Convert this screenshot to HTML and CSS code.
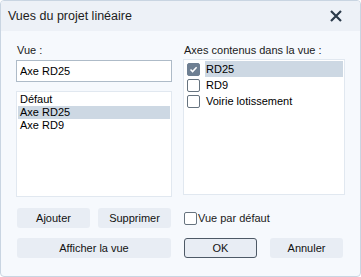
FILE: index.html
```html
<!DOCTYPE html>
<html lang="fr">
<head>
  <meta charset="UTF-8">
  <title>Vues du projet linéaire</title>
  <link rel="stylesheet" href="styles.css">
</head>
<body>
  <div class="dialog">
    <div class="titlebar">
      <span class="title">Vues du projet linéaire</span>
      <svg class="close" width="12" height="12" viewBox="0 0 12 12">
        <path d="M1 1 L11 11 M11 1 L1 11" stroke="#2b3a4a" stroke-width="2.2" fill="none"/>
      </svg>
    </div>

    <div class="content">
      <div class="columns">
        <!-- Left column: view name + list of views -->
        <div class="col left">
          <label class="caption">Vue :</label>
          <input class="name-input" type="text" value="Axe RD25">
          <ul class="listbox">
            <li>Défaut</li>
            <li class="selected">Axe RD25</li>
            <li>Axe RD9</li>
          </ul>
        </div>

        <!-- Right column: axes in the view -->
        <div class="col right">
          <label class="caption">Axes contenus dans la vue :</label>
          <ul class="listbox checklist">
            <li><span class="box checked"><svg width="9" height="9" viewBox="0 0 9 9"><path d="M1.5 4.5 L3.6 6.6 L7.6 2.2" stroke="#fff" stroke-width="1.5" fill="none"/></svg></span><span class="item selected">RD25</span></li>
            <li><span class="box"></span><span class="item">RD9</span></li>
            <li><span class="box"></span><span class="item">Voirie lotissement</span></li>
          </ul>
        </div>
      </div>

      <div class="actions">
        <div class="row">
          <div class="group left">
            <button>Ajouter</button>
            <button>Supprimer</button>
          </div>
          <div class="group right">
            <label class="check-label"><span class="box"></span>Vue par défaut</label>
          </div>
        </div>
        <div class="row">
          <div class="group left">
            <button class="wide">Afficher la vue</button>
          </div>
          <div class="group right">
            <button class="default">OK</button>
            <button>Annuler</button>
          </div>
        </div>
      </div>
    </div>
  </div>
</body>
</html>
```

FILE: styles.css
```css
html, body {
  margin: 0;
  padding: 0;
  background: #fff;
}
body {
  font-family: "Liberation Sans", Arial, sans-serif;
  font-size: 11px;
  color: #000;
}
.dialog {
  width: 361px;
  height: 277px;
  box-sizing: border-box;
  border: 1px solid #c9d5e2;
  border-radius: 4px;
  background: #f6f9fd;
  overflow: hidden;
}
.titlebar {
  height: 30px;
  background: #edf1f7;
  display: flex;
  align-items: center;
  justify-content: space-between;
  padding: 0 18px 0 7px;
}
.title {
  font-family: "Liberation Sans", Arial, sans-serif;
  font-size: 12.5px;
  color: #1c1c1c;
}
.content {
  padding: 12px 15px 0 15px;
}
.columns {
  display: flex;
  gap: 11px;
}
.col.left {
  width: 156px;
}
.col.right {
  width: 162px;
}
.caption {
  display: block;
  height: 14px;
  line-height: 14px;
  padding-left: 1px;
  color: #1a1a1a;
}
.name-input {
  display: block;
  box-sizing: border-box;
  width: 156px;
  height: 22px;
  margin: 3px 0 9px 0;
  border: 1px solid #aebbc8;
  background: #fff;
  font-family: inherit;
  font-size: 11px;
  padding: 0 3px;
  outline: none;
}
.listbox {
  list-style: none;
  margin: 0;
  padding: 1px;
  box-sizing: border-box;
  height: 106px;
  background: #fff;
  border: 1px solid #e1e8f0;
}
.listbox li {
  height: 13px;
  line-height: 13px;
  padding-left: 2px;
}
.listbox li.selected {
  background: #cdd8e3;
}
.col.right .listbox {
  height: 136px;
  margin-top: 2px;
}
.checklist li {
  height: 16px;
  display: flex;
  align-items: center;
  padding-left: 2px;
}
.checklist .item {
  flex: 1;
  height: 16px;
  line-height: 16px;
  margin-left: 5px;
  padding-left: 1px;
}
.checklist .item.selected {
  background: #cdd8e3;
}
.box {
  width: 13px;
  height: 13px;
  box-sizing: border-box;
  border: 1px solid #66737f;
  border-radius: 2px;
  background: #fff;
  display: inline-flex;
  align-items: center;
  justify-content: center;
  flex-shrink: 0;
}
.box.checked {
  background: #6e7f92;
  border-color: #6e7f92;
}
.actions {
  margin-top: 11px;
  display: flex;
  flex-direction: column;
  gap: 10px;
}
.row {
  display: flex;
  gap: 11px;
}
.group {
  display: flex;
  gap: 8px;
  align-items: center;
}
.group.left {
  width: 156px;
  padding-left: 1px;
}
.group.right {
  width: 162px;
  padding-left: 1px;
  gap: 13px;
}
button {
  width: 73px;
  height: 20px;
  border: none;
  border-radius: 3px;
  background: #e8edf4;
  font-family: inherit;
  font-size: 11px;
  color: #111;
  padding: 0;
}
button.wide {
  width: 154px;
}
button.default {
  border: 1px solid #4d5966;
}
.check-label {
  display: flex;
  align-items: center;
  gap: 1px;
  color: #1a1a1a;
}
```
